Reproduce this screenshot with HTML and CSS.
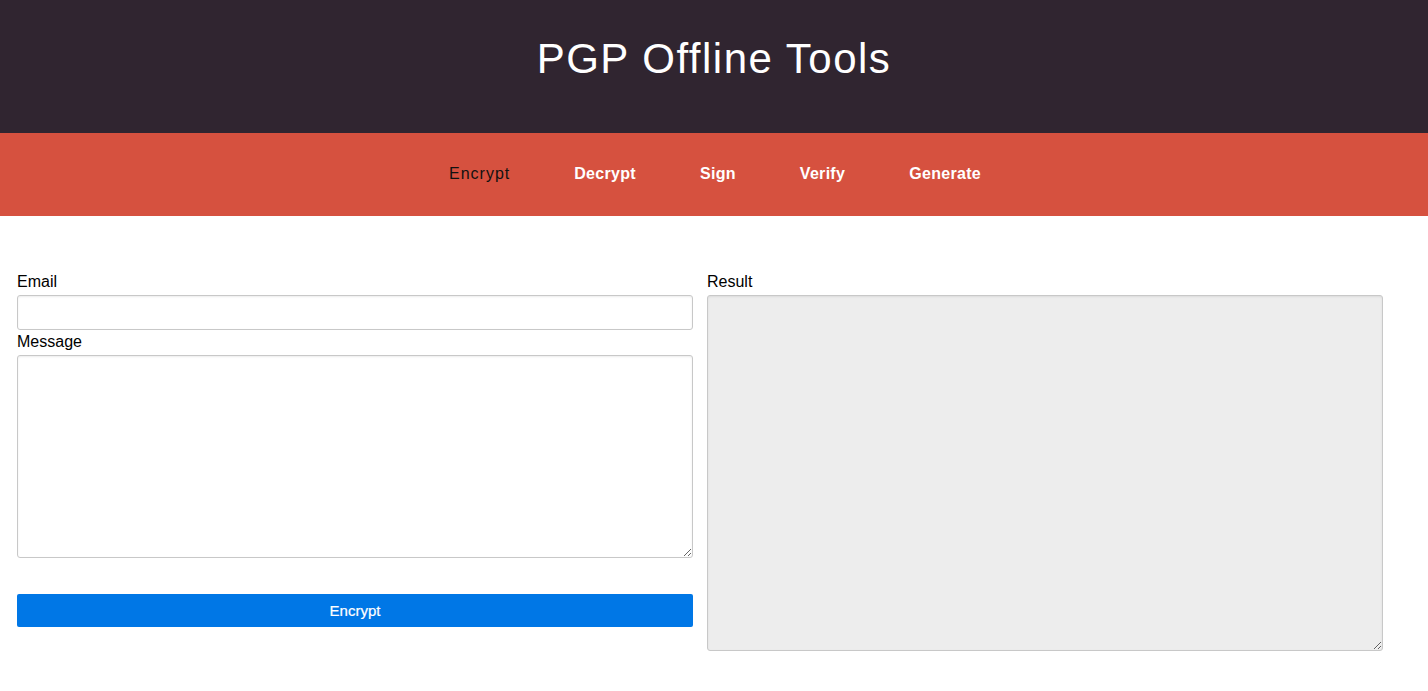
FILE: index.html
```html
<!DOCTYPE html>
<html>
<head>
<meta charset="utf-8">
<link rel="stylesheet" href="styles.css">
</head>
<body>
<header class="masthead">
  <h1 class="title">PGP Offline Tools</h1>
</header>
<nav class="tabs">
  <a class="tab active">Encrypt</a>
  <a class="tab">Decrypt</a>
  <a class="tab">Sign</a>
  <a class="tab">Verify</a>
  <a class="tab">Generate</a>
</nav>
<main class="content">
  <section class="col">
    <label class="label">Email</label>
    <input class="field" type="text">
    <label class="label">Message</label>
    <textarea class="field area"></textarea>
    <button class="btn">Encrypt</button>
  </section>
  <section class="col">
    <label class="label">Result</label>
    <textarea class="field result" readonly></textarea>
  </section>
</main>
</body>
</html>
```
FILE: styles.css
```css
* { box-sizing: border-box; }
body {
  margin: 0;
  font-family: "Liberation Sans", Arial, sans-serif;
  color: #000;
  background: #fff;
}
.masthead {
  background: #302530;
  height: 133px;
  display: flex;
  align-items: center;
  justify-content: center;
}
.title {
  margin: 0 0 16px 0;
  color: #fff;
  font-weight: normal;
  font-size: 42px;
  letter-spacing: 1.5px;
}
.tabs {
  background: #d6513f;
  height: 83px;
  display: flex;
  align-items: center;
  justify-content: center;
  gap: 64px;
  padding-left: 2px;
  padding-bottom: 2px;
}
.tab {
  color: #fff;
  font-size: 16px;
  font-weight: bold;
  letter-spacing: 0.3px;
}
.tab.active {
  color: #111;
  font-weight: normal;
  letter-spacing: 1px;
}
.content {
  display: grid;
  grid-template-columns: 676px 676px;
  align-items: start;
  gap: 14px;
  padding: 57px 0 0 17px;
}
.col {
  display: flex;
  flex-direction: column;
}
.label {
  font-size: 16px;
  line-height: 18px;
  margin-bottom: 4px;
}
.col .label ~ .label { margin-top: 3px; margin-bottom: 4px; }
.field {
  display: block;
  width: 100%;
  border: 1px solid #c8c8c8;
  border-radius: 3px;
  background: #fff;
  box-shadow: inset 0 1px 2px rgba(0,0,0,0.08);
  font-family: inherit;
  font-size: 14px;
  margin: 0;
}
input.field { height: 35px; }
.area { height: 203px; resize: vertical; }
.result { height: 356px; background: #ededed; }
.btn {
  margin-top: 36px;
  height: 33px;
  border: none;
  border-radius: 2px;
  background: #0077e6;
  color: #fff;
  font-family: inherit;
  font-size: 15px;
  -webkit-text-stroke: 0.2px #fff;
}
```
